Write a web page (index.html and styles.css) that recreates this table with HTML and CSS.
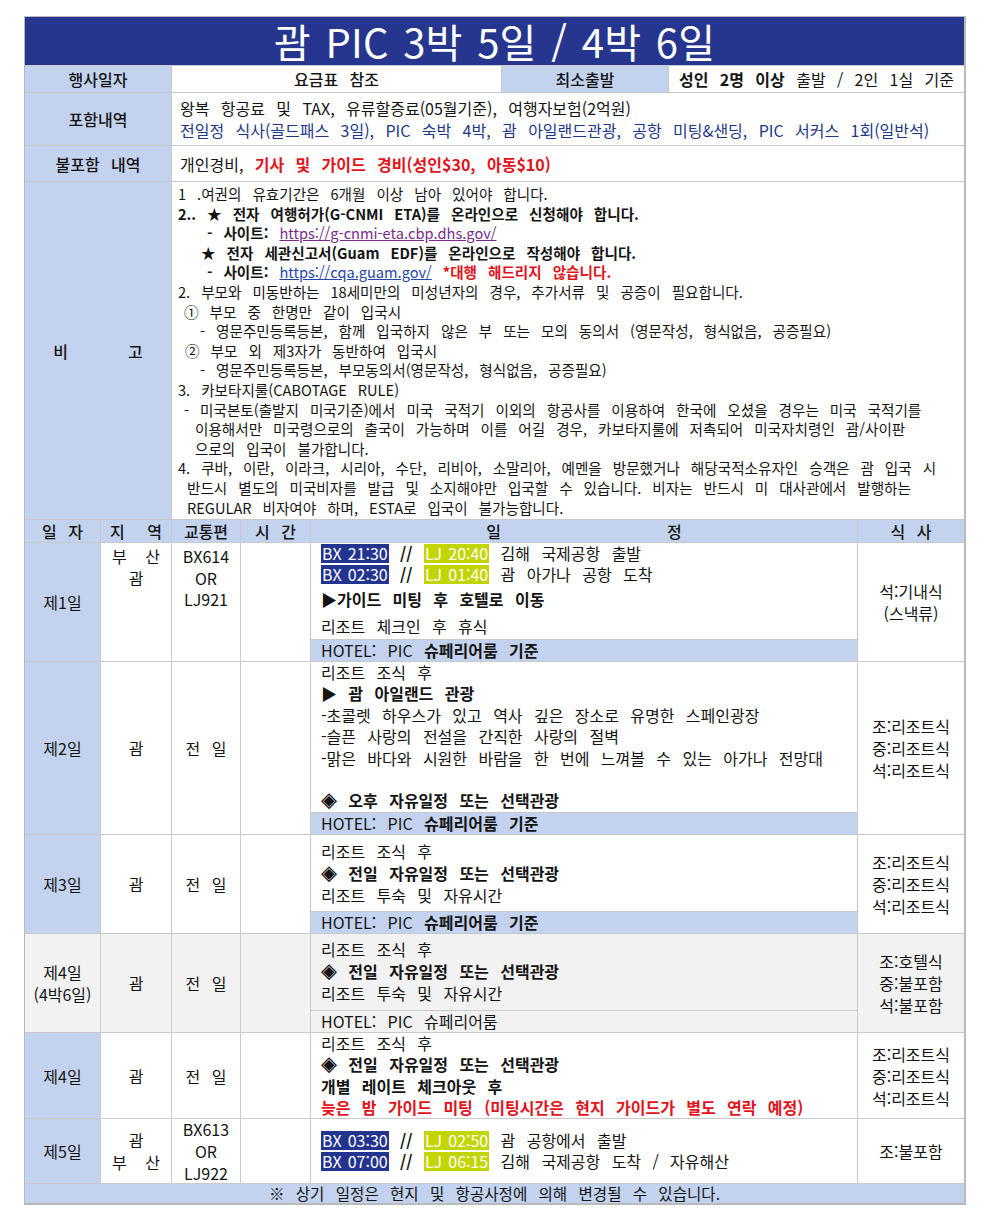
FILE: index.html
```html
<!DOCTYPE html>
<html lang="ko">
<head>
<meta charset="utf-8">
<title>괌 PIC 3박 5일 / 4박 6일</title>
<link rel="stylesheet" href="styles.css">
</head>
<body>
<div class="sheet">
  <div class="title c-all">괌 PIC 3박 5일 / 4박 6일</div>

  <div class="cell lbl c-l">행사일자</div>
  <div class="cell center c-fee medium">요금표 참조</div>
  <div class="cell lbl c-min">최소출발</div>
  <div class="cell center c-dep"><b>성인 2명 이상</b>&nbsp;출발 / 2인 1실 기준</div>

  <div class="cell lbl c-l">포함내역</div>
  <div class="cell c-r incl">
    <div>왕복 항공료 및 TAX, 유류할증료(05월기준), 여행자보험(2억원)</div>
    <div class="navy">전일정 식사(골드패스 3일), PIC 숙박 4박, 괌 아일랜드관광, 공항 미팅&amp;샌딩, PIC 서커스 1회(일반석)</div>
  </div>

  <div class="cell lbl c-l">불포함 내역</div>
  <div class="cell c-r excl">개인경비,&nbsp;<b class="red">기사 및 가이드 경비(성인$30, 아동$10)</b></div>

  <div class="cell lbl c-l spread"><span>비</span><span>고</span></div>
  <div class="cell c-r notes">
    <div class="nl">1 .여권의 유효기간은 6개월 이상 남아 있어야 합니다.</div>
    <div class="nl"><b>2.. ★ 전자 여행허가(G-CNMI ETA)를 온라인으로 신청해야 합니다.</b></div>
    <div class="nl in29"><b>- 사이트:</b>&nbsp;<span class="link purple">https://g-cnmi-eta.cbp.dhs.gov/</span></div>
    <div class="nl in23"><b>★ 전자 세관신고서(Guam EDF)를 온라인으로 작성해야 합니다.</b></div>
    <div class="nl in29"><b>- 사이트:</b>&nbsp;<span class="link blue">https://cqa.guam.gov/</span>&nbsp;<b class="red">*대행 해드리지 않습니다.</b></div>
    <div class="nl">2. 부모와 미동반하는 18세미만의 미성년자의 경우, 추가서류 및 공증이 필요합니다.</div>
    <div class="nl in6">① 부모 중 한명만 같이 입국시</div>
    <div class="nl in22">- 영문주민등록등본, 함께 입국하지 않은 부 또는 모의 동의서 (영문작성, 형식없음, 공증필요)</div>
    <div class="nl in7">② 부모 외 제3자가 동반하여 입국시</div>
    <div class="nl in22">- 영문주민등록등본, 부모동의서(영문작성, 형식없음, 공증필요)</div>
    <div class="nl">3. 카보타지룰(CABOTAGE RULE)</div>
    <div class="nl in6">- 미국본토(출발지 미국기준)에서 미국 국적기 이외의 항공사를 이용하여 한국에 오셨을 경우는 미국 국적기를</div>
    <div class="nl in17">이용해서만 미국령으로의 출국이 가능하며 이를 어길 경우, 카보타지룰에 저촉되어 미국자치령인 괌/사이판</div>
    <div class="nl in17">으로의 입국이 불가합니다.</div>
    <div class="nl">4. 쿠바, 이란, 이라크, 시리아, 수단, 리비아, 소말리아, 예멘을 방문했거나 해당국적소유자인 승객은 괌 입국 시</div>
    <div class="nl in9">반드시 별도의 미국비자를 발급 및 소지해야만 입국할 수 있습니다. 비자는 반드시 미 대사관에서 발행하는</div>
    <div class="nl in9">REGULAR 비자여야 하며, ESTA로 입국이 불가능합니다.</div>
  </div>

  <div class="cell hd">일 자</div>
  <div class="cell hd">지&nbsp; 역</div>
  <div class="cell hd">교통편</div>
  <div class="cell hd">시 간</div>
  <div class="cell hd c-sched split"><span>일</span><span>정</span></div>
  <div class="cell hd">식 사</div>

  <div class="cell day">제1일</div>
  <div class="cell top region1"><div class="ws2">부&nbsp; 산</div><div>괌</div></div>
  <div class="cell top flight1"><div>BX614</div><div>OR</div><div>LJ921</div></div>
  <div class="cell"></div>
  <div class="sched c-sched">
    <div class="sbody">
      <div class="h20"><span class="bx">BX 21:30</span> <b>//</b> <span class="lj">LJ 20:40</span> 김해 국제공항 출발</div>
      <div class="h22"><span class="bx">BX 02:30</span> <b>//</b> <span class="lj">LJ 01:40</span> 괌 아가나 공항 도착</div>
      <div class="h28"><b>▶가이드 미팅 후 호텔로 이동</b></div>
      <div class="h26">리조트 체크인 후 휴식</div>
    </div>
    <div class="hotel">HOTEL: PIC <b>슈페리어룸 기준</b></div>
  </div>
  <div class="cell meal"><div>석:기내식</div><div>(스낵류)</div></div>

  <div class="cell day">제2일</div>
  <div class="cell center">괌</div>
  <div class="cell center">전 일</div>
  <div class="cell"></div>
  <div class="sched c-sched">
    <div class="sbody lh214">
      <div>리조트 조식 후</div>
      <div><b>▶ 괌 아일랜드 관광</b></div>
      <div>-초콜렛 하우스가 있고 역사 깊은 장소로 유명한 스페인광장</div>
      <div>-슬픈 사랑의 전설을 간직한 사랑의 절벽</div>
      <div>-맑은 바다와 시원한 바람을 한 번에 느껴볼 수 있는 아가나 전망대</div>
      <div>&nbsp;</div>
      <div><b>◈ 오후 자유일정 또는 선택관광</b></div>
    </div>
    <div class="hotel">HOTEL: PIC <b>슈페리어룸 기준</b></div>
  </div>
  <div class="cell meal"><div>조:리조트식</div><div>중:리조트식</div><div>석:리조트식</div></div>

  <div class="cell day">제3일</div>
  <div class="cell center">괌</div>
  <div class="cell center">전 일</div>
  <div class="cell"></div>
  <div class="sched c-sched">
    <div class="sbody pt5">
      <div>리조트 조식 후</div>
      <div><b>◈ 전일 자유일정 또는 선택관광</b></div>
      <div>리조트 투숙 및 자유시간</div>
    </div>
    <div class="hotel">HOTEL: PIC <b>슈페리어룸 기준</b></div>
  </div>
  <div class="cell meal"><div>조:리조트식</div><div>중:리조트식</div><div>석:리조트식</div></div>

  <div class="cell day gray"><div class="two"><div>제4일</div><div>(4박6일)</div></div></div>
  <div class="cell center gray">괌</div>
  <div class="cell center gray">전 일</div>
  <div class="cell gray"></div>
  <div class="sched c-sched gray">
    <div class="sbody pt4">
      <div>리조트 조식 후</div>
      <div><b>◈ 전일 자유일정 또는 선택관광</b></div>
      <div>리조트 투숙 및 자유시간</div>
    </div>
    <div class="hotel hotel-gray">HOTEL: PIC 슈페리어룸</div>
  </div>
  <div class="cell meal gray"><div>조:호텔식</div><div>중:불포함</div><div>석:불포함</div></div>

  <div class="cell day">제4일</div>
  <div class="cell center">괌</div>
  <div class="cell center">전 일</div>
  <div class="cell"></div>
  <div class="sched c-sched">
    <div class="sbody lh2125">
      <div>리조트 조식 후</div>
      <div><b>◈ 전일 자유일정 또는 선택관광</b></div>
      <div><b>개별 레이트 체크아웃 후</b></div>
      <div><b class="red">늦은 밤 가이드 미팅 (미팅시간은 현지 가이드가 별도 연락 예정)</b></div>
    </div>
  </div>
  <div class="cell meal"><div>조:리조트식</div><div>중:리조트식</div><div>석:리조트식</div></div>

  <div class="cell day">제5일</div>
  <div class="cell meal"><div>괌</div><div class="ws2">부&nbsp; 산</div></div>
  <div class="cell meal flight5"><div>BX613</div><div>OR</div><div>LJ922</div></div>
  <div class="cell"></div>
  <div class="sched c-sched">
    <div class="sbody mid">
      <div><span class="bx">BX 03:30</span> <b>//</b> <span class="lj">LJ 02:50</span> 괌 공항에서 출발</div>
      <div><span class="bx">BX 07:00</span> <b>//</b> <span class="lj">LJ 06:15</span> 김해 국제공항 도착 / 자유해산</div>
    </div>
  </div>
  <div class="cell meal">조:불포함</div>

  <div class="cell foot c-all">※ 상기 일정은 현지 및 항공사정에 의해 변경될 수 있습니다.</div>
</div>
</body>
</html>
```

FILE: styles.css
```css
html, body {
  background: #ffffff;
}

body {
  margin: 0;
  padding: 16px 0 0 24px;
  font-family: "Noto Sans CJK KR", "Noto Sans", sans-serif;
  font-size: 16px;
  color: #141414;
  word-spacing: 0.43em;
}

.sheet {
  display: grid;
  grid-template-columns: 75px 70px 68px 69px 190px 166px 188px 106px;
  grid-template-rows: 48px 26px 52px 35px 337px 22px 118px 172px 98px 98px 85px 64px 19px;
  gap: 1px;
  width: max-content;
  background: #c9c9c9;
  border: 1px solid #b9b9b9;
  border-right-width: 2px;
  border-bottom-width: 2px;
}

.c-all { grid-column: 1 / -1; }
.c-l { grid-column: 1 / 3; }
.c-fee { grid-column: 3 / 6; }
.c-min { grid-column: 6 / 7; }
.c-dep { grid-column: 7 / 9; }
.c-r { grid-column: 3 / 9; }
.c-sched { grid-column: span 3; }

.title {
  background: #26368f;
  color: #ffffff;
  font-size: 40px;
  line-height: 48px;
  text-align: center;
  word-spacing: 0.08em;
  letter-spacing: 0.2px;
}

.cell {
  background: #ffffff;
  display: flex;
  align-items: center;
  line-height: 22px;
  white-space: nowrap;
}

.center { justify-content: center; text-align: center; }
.medium { font-weight: 500; }

.lbl {
  background: #c3d2ee;
  justify-content: center;
  font-weight: 500;
}

.spread { gap: 60px; }

.incl {
  flex-direction: column;
  align-items: flex-start;
  justify-content: center;
  padding-left: 8px;
}
.incl div { line-height: 22px; }

.navy { color: #1d3789; }
.red { color: #e3121b; }

.excl { padding-left: 8px; }

.notes {
  flex-direction: column;
  align-items: flex-start;
  justify-content: flex-start;
  padding: 2px 0 0 6px;
  font-size: 14.6px;
}
.nl { line-height: 19.6px; }
.in6 { padding-left: 6px; }
.in7 { padding-left: 7px; }
.in9 { padding-left: 9px; }
.in17 { padding-left: 17px; }
.in22 { padding-left: 22px; }
.in23 { padding-left: 23px; }
.in29 { padding-left: 29px; }

.link { text-decoration: underline; }
.purple { color: #7a2a8c; }
.blue { color: #2446a8; }

.hd {
  background: #c3d2ee;
  justify-content: center;
  font-weight: 500;
}
.split { gap: 166px; }

.day {
  background: #c3d2ee;
  justify-content: center;
  text-align: center;
}
.two { line-height: 22px; }

.ws2 { word-spacing: 0.3em; }

.top {
  flex-direction: column;
  align-items: center;
  justify-content: flex-start;
}
.region1 { padding-top: 2px; }
.flight1 { padding-top: 3px; line-height: 21.5px; }
.flight5 { line-height: 21.3px; }

.meal {
  flex-direction: column;
  justify-content: center;
  align-items: center;
  line-height: 22px;
}

.gray { background: #f2f2f2; }

.sched {
  display: flex;
  flex-direction: column;
  background: #ffffff;
  white-space: nowrap;
}
.sched.gray { background: #f2f2f2; }
.sbody {
  flex: 1;
  padding-left: 10px;
  line-height: 22px;
}
.sbody.mid {
  display: flex;
  flex-direction: column;
  justify-content: center;
  line-height: 21px;
}
.lh214 { line-height: 21.4px; }
.lh2125 { line-height: 21.25px; }
.pt5 { padding-top: 5px; }
.pt4 { padding-top: 4px; }

.h20 { height: 20px; line-height: 20px; }
.h22 { height: 22px; line-height: 22px; }
.h28 { height: 28px; line-height: 28px; }
.h26 { height: 26px; line-height: 26px; }

.hotel {
  height: 21px;
  line-height: 21px;
  border-top: 1px solid #c9c9c9;
  background: #c3d2ee;
  padding-left: 10px;
}
.hotel b { font-weight: 700; }
.hotel-gray { background: #f2f2f2; }

.bx, .lj {
  display: inline-block;
  line-height: 19px;
  padding: 0 1px;
  color: #ffffff;
  word-spacing: 0.1em;
}
.bx { background: #233390; }
.lj { background: #c3d500; }

.foot {
  background: #c3d2ee;
  justify-content: center;
  line-height: 19px;
  font-size: 15.6px;
}
```
